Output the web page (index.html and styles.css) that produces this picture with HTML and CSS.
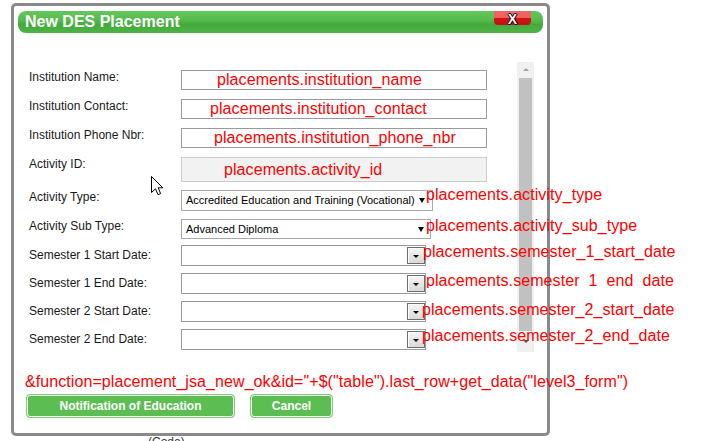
FILE: index.html
```html
<!DOCTYPE html>
<html lang="en">
<head>
<meta charset="utf-8">
<title>New DES Placement</title>
<link rel="stylesheet" href="styles.css">
</head>
<body>
<div class="dialog">
  <div class="titlebar">
    <div class="title">New DES Placement</div>
    <div class="close">X</div>
  </div>
  <div class="main">
    <div class="form">
      <div class="row">
        <div class="label">Institution Name:</div>
        <div class="field p1">placements.institution_name</div>
      </div>
      <div class="row">
        <div class="label">Institution Contact:</div>
        <div class="field p2">placements.institution_contact</div>
      </div>
      <div class="row">
        <div class="label">Institution Phone Nbr:</div>
        <div class="field p3">placements.institution_phone_nbr</div>
      </div>
      <div class="row row-id">
        <div class="label">Activity ID:</div>
        <div class="field field-id p4">placements.activity_id</div>
      </div>
      <div class="row">
        <div class="label">Activity Type:</div>
        <div class="select"><span>Accredited Education and Training (Vocational)</span><i class="caret"></i></div>
        <div class="tag t5">placements.activity_type</div>
      </div>
      <div class="row row-sub">
        <div class="label">Activity Sub Type:</div>
        <div class="select select-sub"><span>Advanced Diploma</span><i class="caret"></i></div>
        <div class="tag t6">placements.activity_sub_type</div>
      </div>
      <div class="row row-date">
        <div class="label">Semester 1 Start Date:</div>
        <div class="date"><div class="picker"><i class="pcaret"></i></div></div>
        <div class="tag t7">placements.semester_1_start_date</div>
      </div>
      <div class="row row-date">
        <div class="label">Semester 1 End Date:</div>
        <div class="date"><div class="picker"><i class="pcaret"></i></div></div>
        <div class="tag t8">placements.semester_1_end_date</div>
      </div>
      <div class="row row-date">
        <div class="label">Semester 2 Start Date:</div>
        <div class="date"><div class="picker"><i class="pcaret"></i></div></div>
        <div class="tag t9">placements.semester_2_start_date</div>
      </div>
      <div class="row row-date">
        <div class="label">Semester 2 End Date:</div>
        <div class="date"><div class="picker"><i class="pcaret"></i></div></div>
        <div class="tag t10">placements.semester_2_end_date</div>
      </div>
    </div>
    <div class="scrollbar">
      <div class="sb-btn"><i class="sb-up"></i></div>
      <div class="thumb"></div>
      <div class="sb-btn sb-btn-down"><i class="sb-down"></i></div>
    </div>
  </div>
  <div class="footer">
    <div class="fn">&amp;function=placement_jsa_new_ok&amp;id="+$("table").last_row+get_data("level3_form")</div>
    <div class="buttons">
      <div class="btn btn-notify">Notification of Education</div>
      <div class="btn btn-cancel">Cancel</div>
    </div>
  </div>
</div>
<div class="under">(Code)</div>
<svg class="cursor" width="13" height="20" viewBox="0 0 13 20"><path d="M0.5 0.5 V16.5 L4.5 12.8 L7 18.7 L9.6 17.6 L7.2 11.8 L11.8 11.8 Z" fill="#fff" stroke="#000" stroke-width="1" stroke-linejoin="miter"/></svg>
</body>
</html>
```

FILE: styles.css
```css
* { box-sizing: border-box; }
html, body { margin: 0; padding: 0; }
body {
  background: #fff;
  font-family: "Liberation Sans", Arial, sans-serif;
  width: 707px;
  height: 441px;
  overflow: hidden;
  position: relative;
}

.dialog {
  margin: 3px 0 0 11px;
  width: 539px;
  height: 433px;
  border: 3px solid #8a8a8c;
  border-radius: 5px;
  padding: 5px 4px 0;
  background: #fff;
  display: flex;
  flex-direction: column;
}

.titlebar {
  height: 22px;
  flex: none;
  border-radius: 8px;
  background: linear-gradient(to bottom, #64c65c 0%, #56bc4e 40%, #43a93c 62%, #4db446 100%);
  display: flex;
  justify-content: space-between;
  align-items: flex-start;
  padding-left: 7px;
}
.title {
  color: #fff;
  font-weight: bold;
  font-size: 16px;
  line-height: 22px;
}
.close {
  width: 37px;
  height: 14px;
  margin-right: 12px;
  background: linear-gradient(to bottom, #f06666 0%, #ee5e5e 50%, #d01414 50%, #c81010 100%);
  border-radius: 0 0 4px 4px;
  color: #fff;
  font-weight: bold;
  font-size: 14px;
  line-height: 16px;
  text-align: center;
  text-shadow: 1px 0 0 #000, -1px 0 0 #000, 0 1px 0 #000, 0 -1px 0 #000;
}

.main {
  display: flex;
  margin-top: 29px;
  height: 290px;
  flex: none;
}
.form {
  flex: 1;
  min-width: 0;
  padding: 8px 0 0 11px;
  display: flex;
  flex-direction: column;
}
.row {
  display: flex;
  align-items: flex-start;
  height: 29px;
  flex: none;
}
.row-id { height: 33px; }
.row-sub { height: 26px; }
.row-date { height: 28px; }

.label {
  width: 152px;
  flex: none;
  font-size: 12px;
  line-height: 14px;
  color: #1a1a1a;
  margin-top: 0;
}
.row-date .label { margin-top: 3px; }

.field {
  width: 306px;
  height: 20px;
  flex: none;
  border: 1px solid #9a9a9a;
  color: #f00;
  font-size: 16px;
  line-height: 18px;
  letter-spacing: 0.08px;
  white-space: nowrap;
}
.field-id {
  height: 25px;
  background: #f2f2f2;
  border-color: #cdcdcd;
  padding-top: 3px;
}
.p1 { padding-left: 35px; }
.p2 { padding-left: 28px; }
.p3 { padding-left: 32px; }
.p4 { padding-left: 42px; }

.select {
  width: 252px;
  height: 21px;
  flex: none;
  border: 1px solid #a9a9a9;
  font-size: 11px;
  line-height: 19px;
  padding: 0 7px 0 4px;
  color: #000;
  display: flex;
  justify-content: space-between;
  align-items: center;
  white-space: nowrap;
}
.select-sub {
  width: 250px;
  height: 20px;
  line-height: 18px;
  padding-right: 6px;
}
.caret {
  width: 0;
  height: 0;
  border-left: 3px solid transparent;
  border-right: 3px solid transparent;
  border-top: 5px solid #000;
}

.date {
  width: 245px;
  height: 21px;
  flex: none;
  border: 1px solid #9a9a9a;
  display: flex;
  justify-content: flex-end;
  align-items: center;
}
.picker {
  width: 18px;
  height: 17px;
  border: 1px solid #6d6d6d;
  background: linear-gradient(to bottom, #f6f6f6, #d9d9d9);
  box-shadow: inset 1px 1px 0 #fff;
  display: flex;
  align-items: center;
  justify-content: center;
}
.pcaret {
  width: 0;
  height: 0;
  margin-top: 2px;
  border-left: 3px solid transparent;
  border-right: 3px solid transparent;
  border-top: 3px solid #000;
}

.tag {
  position: relative;
  z-index: 1;
  font-size: 16px;
  line-height: 18px;
  letter-spacing: 0.08px;
  color: #f00;
  white-space: nowrap;
  flex: none;
}
.t5 { margin: -4px 0 0 -7px; }
.t6 { margin: -2px 0 0 -5px; }
.t7 { margin: -2px 0 0 -3px; }
.t8 { margin: -1px 0 0 0; height: 16px; overflow: hidden; }
.t9 { margin: 0 0 0 -4px; }
.t10 { margin: -2px 0 0 -4px; }

.scrollbar {
  width: 17px;
  flex: none;
  margin-right: 9px;
  background: #f0f0f0;
  display: flex;
  flex-direction: column;
  align-items: center;
}
.sb-btn {
  height: 16px;
  width: 100%;
  display: flex;
  align-items: center;
  justify-content: center;
}
.sb-btn-down { height: 21px; }
.sb-up {
  width: 0; height: 0;
  border-left: 3px solid transparent;
  border-right: 3px solid transparent;
  border-bottom: 3px solid #a3a3a3;
  margin-top: -1px;
}
.sb-down {
  width: 0; height: 0;
  border-left: 3px solid transparent;
  border-right: 3px solid transparent;
  border-top: 3px solid #555;
}
.thumb {
  width: 13px;
  height: 253px;
  background: #c1c1c1;
}

.footer {
  padding: 21px 0 0 7px;
}
.fn {
  font-size: 16px;
  line-height: 18px;
  letter-spacing: 0.08px;
  color: #f00;
  white-space: nowrap;
}
.buttons {
  display: flex;
  gap: 15px;
  margin-top: 3px;
  padding-left: 1px;
}
.btn {
  height: 24px;
  border: 1px solid #7fd077;
  border-radius: 4px;
  background: #5cbe52;
  box-shadow: inset 0 0 0 1px #f4fff2;
  color: #fff;
  font-weight: bold;
  font-size: 12px;
  line-height: 22px;
  text-align: center;
}
.btn-notify { width: 209px; }
.btn-cancel { width: 83px; }

.under {
  margin: -1px 0 0 148px;
  font-size: 12px;
  line-height: 14px;
  color: #333;
}

.cursor {
  position: absolute;
  left: 151px;
  top: 176px;
}
```
